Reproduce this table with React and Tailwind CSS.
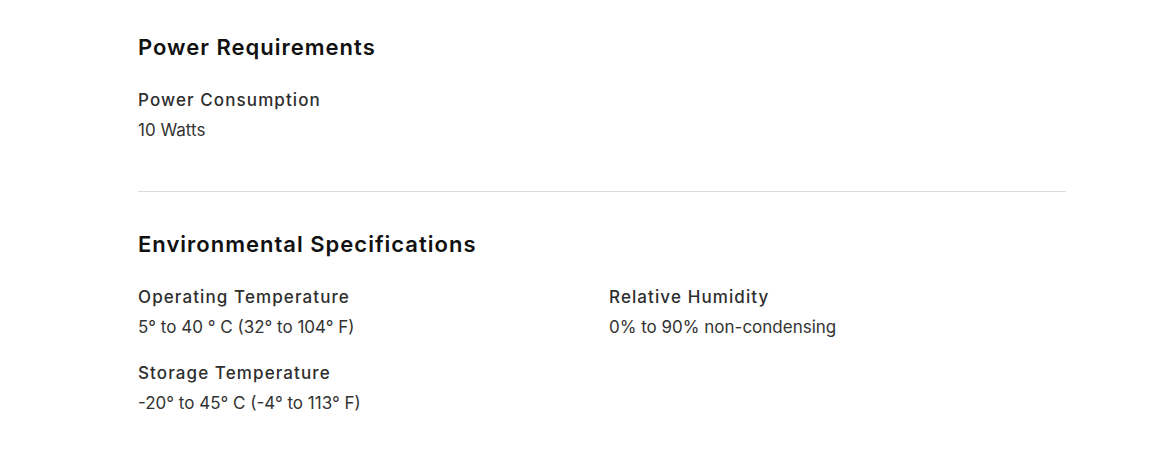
export default function App() {
  const Item = ({ label, value }) => (
    <div>
      <div className="text-[17px] leading-[30px] font-medium tracking-[1.1px] text-[#2e2e2e]">{label}</div>
      <div className="text-[17px] leading-[30px] text-[#333333]">{value}</div>
    </div>
  );
  return (
    <div className="w-[1168px] h-[461px] bg-white overflow-hidden" style={{ fontFamily: '"Inter", "Liberation Sans", sans-serif' }}>
      <div className="ml-[138px] w-[928px] pt-[33px]">
        <section>
          <h2 className="text-[22px] leading-[28px] font-semibold tracking-[1px] text-[#111111]">Power Requirements</h2>
          <div className="mt-[24px]">
            <Item label="Power Consumption" value="10 Watts" />
          </div>
        </section>
        <hr className="mt-[46px] border-0 border-t border-[#dcdcdc]" />
        <section className="mt-[38px]">
          <h2 className="text-[22px] leading-[28px] font-semibold tracking-[1px] text-[#111111]">Environmental Specifications</h2>
          <div className="mt-[24px] grid grid-cols-2 gap-x-[14px] gap-y-[16px]">
            <Item label="Operating Temperature" value="5° to 40 ° C (32° to 104° F)" />
            <Item label="Relative Humidity" value="0% to 90% non-condensing" />
            <Item label="Storage Temperature" value="-20° to 45° C (-4° to 113° F)" />
          </div>
        </section>
      </div>
    </div>
  );
}
